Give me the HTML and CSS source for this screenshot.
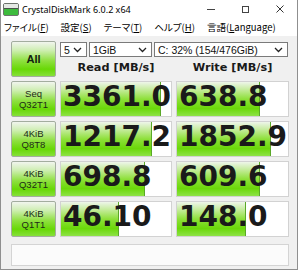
FILE: index.html
```html
<html>
  <head>
    <title>CrystalDiskMark 6.0.2 x64</title>
    <meta name="viewport" content="width=device-width, initial-scale=1.0">
    <link rel="stylesheet" href="styles.css">
  </head>

  <body>
    <div class="window">
      <div class="titlebar">
        <svg class="app-icon" width="16" height="13" viewBox="0 0 16 13">
          <rect x="0.5" y="0.5" width="15" height="12" rx="1.5" fill="#b8beb8" stroke="#6d746d"/>
          <rect x="1" y="1" width="14" height="4" fill="#e4e8e4"/>
          <rect x="1" y="6" width="14" height="6" fill="#3dbb3d"/>
          <rect x="1" y="5" width="14" height="1" fill="#4a524a"/>
        </svg>
        <span class="title">CrystalDiskMark 6.0.2 x64</span>
        <div class="controls">
          <span class="ctl">
            <svg width="10" height="10" viewBox="0 0 10 10"><path d="M1 5.5H9" stroke="#444" stroke-width="1"/></svg>
          </span>
          <span class="ctl">
            <svg width="10" height="10" viewBox="0 0 10 10"><rect x="2.5" y="2.5" width="6" height="6" fill="none" stroke="#444" stroke-width="1"/></svg>
          </span>
          <span class="ctl">
            <svg width="10" height="10" viewBox="0 0 10 10"><path d="M1.5 1.5L8.5 8.5M8.5 1.5L1.5 8.5" stroke="#333" stroke-width="1"/></svg>
          </span>
        </div>
      </div>

      <ul class="menu">
        <li>ファイル(<u>F</u>)</li>
        <li>設定(<u>S</u>)</li>
        <li>テーマ(<u>T</u>)</li>
        <li>ヘルプ(<u>H</u>)</li>
        <li>言語(<u>L</u>anguage)</li>
      </ul>

      <div class="client">
        <div class="board">
          <div class="btn all">All</div>
          <div class="top">
            <div class="selects">
              <div class="select sel-count"><span>5</span><svg width="9" height="6" viewBox="0 0 9 6"><path d="M1 1L4.5 4.5L8 1" fill="none" stroke="#222" stroke-width="1.3"/></svg></div>
              <div class="select sel-size"><span>1GiB</span><svg width="9" height="6" viewBox="0 0 9 6"><path d="M1 1L4.5 4.5L8 1" fill="none" stroke="#222" stroke-width="1.3"/></svg></div>
              <div class="select sel-drive"><span>C: 32% (154/476GiB)</span><svg width="9" height="6" viewBox="0 0 9 6"><path d="M1 1L4.5 4.5L8 1" fill="none" stroke="#222" stroke-width="1.3"/></svg></div>
            </div>
            <div class="heads">
              <span>Read [MB/s]</span>
              <span>Write [MB/s]</span>
            </div>
          </div>

          <div class="btn test"><span>Seq</span><span>Q32T1</span></div>
          <div class="value"><span class="bar" style="width: 100px"></span><span class="num">3361.0</span></div>
          <div class="value"><span class="bar" style="width: 83px"></span><span class="num">638.8</span></div>

          <div class="btn test"><span>4KiB</span><span>Q8T8</span></div>
          <div class="value"><span class="bar" style="width: 91px"></span><span class="num">1217.2</span></div>
          <div class="value"><span class="bar" style="width: 94px"></span><span class="num">1852.9</span></div>

          <div class="btn test"><span>4KiB</span><span>Q32T1</span></div>
          <div class="value"><span class="bar" style="width: 84px"></span><span class="num">698.8</span></div>
          <div class="value"><span class="bar" style="width: 83px"></span><span class="num">609.6</span></div>

          <div class="btn test"><span>4KiB</span><span>Q1T1</span></div>
          <div class="value"><span class="bar" style="width: 58px"></span><span class="num">46.10</span></div>
          <div class="value"><span class="bar" style="width: 69px"></span><span class="num">148.0</span></div>
        </div>
        <div class="comment"></div>
      </div>
    </div>
  </body>
</html>
```

FILE: styles.css
```css
*{
  margin: 0px;
  padding: 0px;
  box-sizing: border-box;
}

body{
  width: 300px;
  height: 273px;
  overflow: hidden;
  background-color: #ffffff;
  font-family: "Liberation Sans", Arial, sans-serif;
}

.window{
  width: 298px;
  height: 270px;
  display: flex;
  flex-direction: column;
  background-color: #ffffff;
  border: 1px solid #8f8f8f;
  border-top: none;
}

/* title bar */
.titlebar{
  height: 18px;
  display: flex;
  align-items: center;
}

.app-icon{
  margin-left: 2px;
  margin-top: 1px;
}

.title{
  margin-left: 3px;
  font-size: 9px;
  color: #000000;
  font-family: "Noto Sans", "Liberation Sans", sans-serif;
}

.controls{
  margin-left: auto;
  display: flex;
  height: 18px;
}

.ctl{
  width: 34.5px;
  display: flex;
  align-items: center;
  justify-content: center;
}

/* menu */
.menu{
  height: 18px;
  display: flex;
  align-items: center;
  list-style-type: none;
  padding-left: 3px;
  gap: 12px;
  font-family: "Noto Sans CJK JP", sans-serif;
  font-size: 9.5px;
  font-feature-settings: "palt";
  color: #000000;
}

.menu u{
  text-underline-offset: 1px;
}

/* main area */
.client{
  flex: 1;
  background-color: #f0f0f0;
  padding: 5px 0px 0px 10px;
}

.board{
  display: grid;
  grid-template-columns: 45px 112px 113px;
  grid-template-rows: repeat(5, 36px);
  column-gap: 4px;
  row-gap: 4px;
}

.btn{
  border: 1px solid #a3ad9f;
  border-radius: 2px;
  background: linear-gradient(to bottom, #f1f5ee 0%, #cdeeb0 25%, #8fe040 55%, #68d806 80%, #86e03a 100%);
  display: flex;
  flex-direction: column;
  align-items: center;
  justify-content: center;
  color: #1d2a18;
}

.all{
  font-weight: bold;
  font-size: 11px;
  color: #102010;
}

.test{
  font-size: 9.5px;
  line-height: 11px;
}

.top{
  grid-column: 2 / 4;
  display: flex;
  flex-direction: column;
}

.selects{
  display: flex;
  gap: 2px;
  margin-top: 1px;
}

.select{
  height: 15px;
  background-color: #ffffff;
  border: 1px solid #7a7a7a;
  display: flex;
  align-items: center;
  justify-content: space-between;
  padding: 0px 4px 0px 3px;
  font-size: 10.5px;
  color: #111111;
}

.sel-count{
  width: 27px;
}

.sel-size{
  width: 63px;
}

.sel-drive{
  width: 134px;
}

.heads{
  flex: 1;
  display: grid;
  grid-template-columns: 112px 113px;
  column-gap: 4px;
  align-items: center;
  font-family: "DejaVu Sans", Verdana, sans-serif;
  font-weight: bold;
  font-size: 11.3px;
  color: #1a1a1a;
  text-align: center;
  padding-top: 1px;
}

.value{
  position: relative;
  background-color: #ffffff;
  border: 1px solid #d2d2d2;
}

.bar{
  position: absolute;
  left: 0px;
  top: 0px;
  bottom: 0px;
  background: linear-gradient(to bottom, #eef5ea 0%, #c6ec9e 22%, #8ee03a 50%, #6bd80a 78%, #8ee246 100%);
  border-right: 1px solid #5aa828;
}

.num{
  position: relative;
  display: block;
  padding-left: 2px;
  font-family: "DejaVu Sans", Verdana, sans-serif;
  font-weight: bold;
  font-size: 28px;
  line-height: 29px;
  color: #1a1a1a;
  white-space: nowrap;
}

.comment{
  margin-top: 7px;
  width: 278px;
  height: 22px;
  background-color: #fbfbfb;
  border: 1px solid #d4d4d4;
}
```
